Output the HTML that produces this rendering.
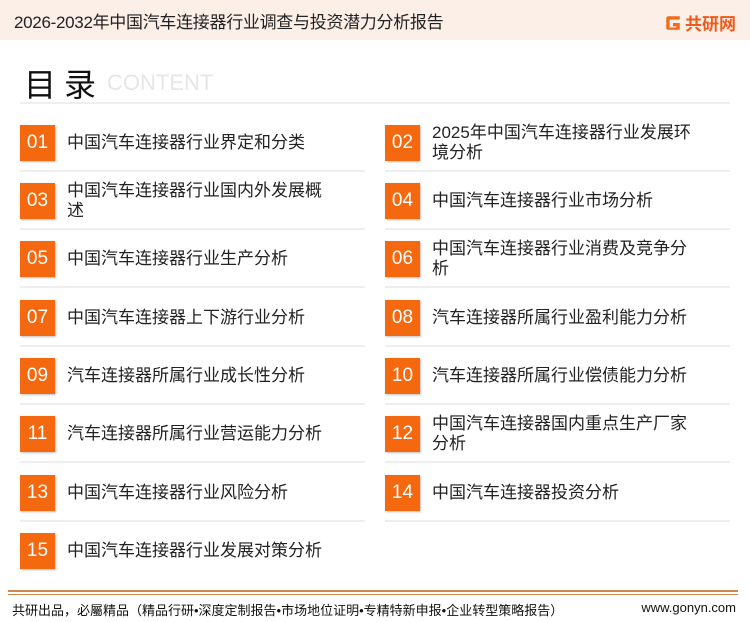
<!DOCTYPE html>
<html><head><meta charset="utf-8"><style>
*{margin:0;padding:0;box-sizing:border-box}
body{width:750px;height:622px;background:#fff;font-family:"Liberation Sans","Noto Sans CJK SC",sans-serif;color:#222;position:relative;overflow:hidden}
.hdr{position:absolute;left:0;top:0;width:750px;height:40px;background:#fcefe7}
.hdr .t{position:absolute;left:14px;top:8px;font-size:17px;color:#222;letter-spacing:-0.3px}
.logo{position:absolute;left:664px;top:10px;display:flex;align-items:center}
.logo span{font-size:17px;font-weight:bold;color:#f05a1a;margin-left:3px}
.mulu{position:absolute;left:24px;top:60px;font-size:32px;color:#111;letter-spacing:8px}
.cont{position:absolute;left:107px;top:70px;font-size:22px;color:#e6e6e6}
.hl{position:absolute;left:20px;top:102px;width:710px;height:2px;background:#eee}
.item{position:absolute;height:36px}
.b{position:absolute;left:0;top:0;width:35px;height:36px;background:#f4680f;color:#fff;font-size:19px;line-height:36px;text-align:center;box-shadow:1px 1px 2px rgba(0,0,0,.25)}
.tx{position:absolute;left:47px;font-size:17px;line-height:20px;color:#222;width:264px}
.sep{position:absolute;height:2px;background:#eee}
.fl1{position:absolute;left:8px;top:590px;width:730px;height:2px;background:#d4864c}
.fl2{position:absolute;left:8px;top:594px;width:730px;height:1px;background:#d4864c}
.ft{position:absolute;left:12px;top:600px;font-size:13px;color:#111}
.fr{position:absolute;right:14px;top:600px;font-size:13px;color:#111}
</style></head><body>
<div class="hdr"><div class="t">2026-2032年中国汽车连接器行业调查与投资潜力分析报告</div>
<div class="logo"><svg width="18" height="18" viewBox="0 0 16 16"><path d="M14 2H4Q2 2 2 4V12Q2 14 4 14H14V8H8V11H11V12H5V5H14Z" fill="#f26a1a"/></svg><span>共研网</span></div></div>
<div class="mulu">目录</div><div class="cont">CONTENT</div>
<div class="hl"></div>

<div class="item" style="left:20px;top:125px"><div class="b">01</div><div class="tx" style="top:8px">中国汽车连接器行业界定和分类</div></div>
<div class="item" style="left:385px;top:125px"><div class="b">02</div><div class="tx" style="top:-2px">2025年中国汽车连接器行业发展环境分析</div></div>
<div class="item" style="left:20px;top:183px"><div class="b">03</div><div class="tx" style="top:-2px">中国汽车连接器行业国内外发展概述</div></div>
<div class="item" style="left:385px;top:183px"><div class="b">04</div><div class="tx" style="top:8px">中国汽车连接器行业市场分析</div></div>
<div class="item" style="left:20px;top:241px"><div class="b">05</div><div class="tx" style="top:8px">中国汽车连接器行业生产分析</div></div>
<div class="item" style="left:385px;top:241px"><div class="b">06</div><div class="tx" style="top:-2px">中国汽车连接器行业消费及竞争分析</div></div>
<div class="item" style="left:20px;top:300px"><div class="b">07</div><div class="tx" style="top:8px">中国汽车连接器上下游行业分析</div></div>
<div class="item" style="left:385px;top:300px"><div class="b">08</div><div class="tx" style="top:8px">汽车连接器所属行业盈利能力分析</div></div>
<div class="item" style="left:20px;top:358px"><div class="b">09</div><div class="tx" style="top:8px">汽车连接器所属行业成长性分析</div></div>
<div class="item" style="left:385px;top:358px"><div class="b">10</div><div class="tx" style="top:8px">汽车连接器所属行业偿债能力分析</div></div>
<div class="item" style="left:20px;top:416px"><div class="b">11</div><div class="tx" style="top:8px">汽车连接器所属行业营运能力分析</div></div>
<div class="item" style="left:385px;top:416px"><div class="b">12</div><div class="tx" style="top:-2px">中国汽车连接器国内重点生产厂家分析</div></div>
<div class="item" style="left:20px;top:475px"><div class="b">13</div><div class="tx" style="top:8px">中国汽车连接器行业风险分析</div></div>
<div class="item" style="left:385px;top:475px"><div class="b">14</div><div class="tx" style="top:8px">中国汽车连接器投资分析</div></div>
<div class="item" style="left:20px;top:533px"><div class="b">15</div><div class="tx" style="top:8px">中国汽车连接器行业发展对策分析</div></div>

<div class="sep" style="left:20px;top:170px;width:345px"></div><div class="sep" style="left:385px;top:170px;width:345px"></div>
<div class="sep" style="left:20px;top:228px;width:345px"></div><div class="sep" style="left:385px;top:228px;width:345px"></div>
<div class="sep" style="left:20px;top:286px;width:345px"></div><div class="sep" style="left:385px;top:286px;width:345px"></div>
<div class="sep" style="left:20px;top:345px;width:345px"></div><div class="sep" style="left:385px;top:345px;width:345px"></div>
<div class="sep" style="left:20px;top:403px;width:345px"></div><div class="sep" style="left:385px;top:403px;width:345px"></div>
<div class="sep" style="left:20px;top:461px;width:345px"></div><div class="sep" style="left:385px;top:461px;width:345px"></div>
<div class="sep" style="left:20px;top:520px;width:345px"></div><div class="sep" style="left:385px;top:520px;width:345px"></div>

<div class="fl1"></div><div class="fl2"></div>
<div class="ft">共研出品，必屬精品（精品行研•深度定制报告•市场地位证明•专精特新申报•企业转型策略报告）</div>
<div class="fr">www.gonyn.com</div>
</body></html>
